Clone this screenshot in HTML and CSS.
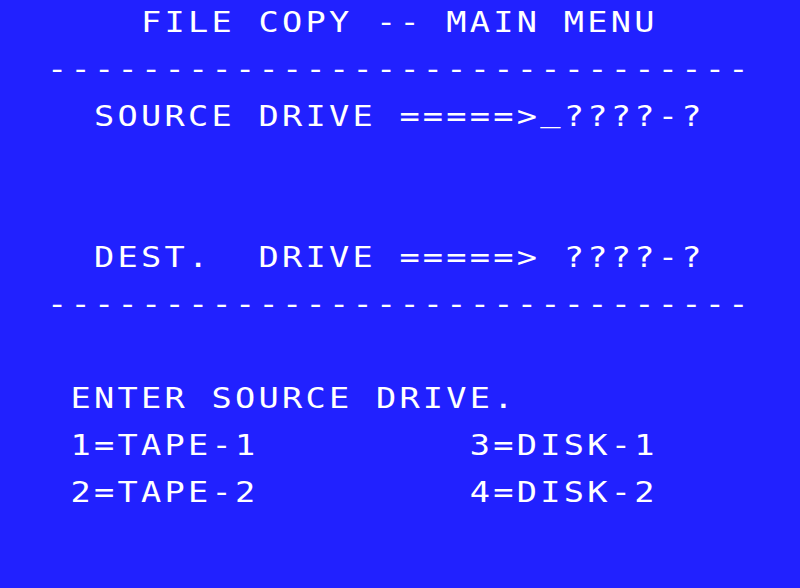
FILE: index.html
```
<!DOCTYPE html>
<html>
<head>
    <link rel="stylesheet" href="styles.css">
</head>
<body>
<div class="screen">
<pre class="screen__text">      FILE COPY -- MAIN MENU

  ------------------------------

    SOURCE DRIVE =====><span class="cursor">_</span>????-?





    DEST.  DRIVE =====> ????-?

  ------------------------------



   ENTER SOURCE DRIVE.

   1=TAPE-1         3=DISK-1

   2=TAPE-2         4=DISK-2</pre>
</div>
</body>
</html>
```
FILE: styles.css
```
html, body {
    margin: 0;
    height: 100%;
    background-color: #2121ff;
    color: #ffffff;
}

.screen {
    height: 588px;
    overflow: hidden;
    padding-top: 11px;
    box-sizing: border-box;
}

/* glyphs are stretched a bit to look like the wide 8x8 cells */
.screen__text {
    margin: 0;
    font-family: "DejaVu Sans Mono", monospace;
    font-size: 28px;
    line-height: 23.5px;
    letter-spacing: 2.72px;
    white-space: pre;
    transform: scaleX(1.2);
    transform-origin: 0 0;
}

.cursor {
    display: inline-block;
    transform: translateY(-5px);
}
```
